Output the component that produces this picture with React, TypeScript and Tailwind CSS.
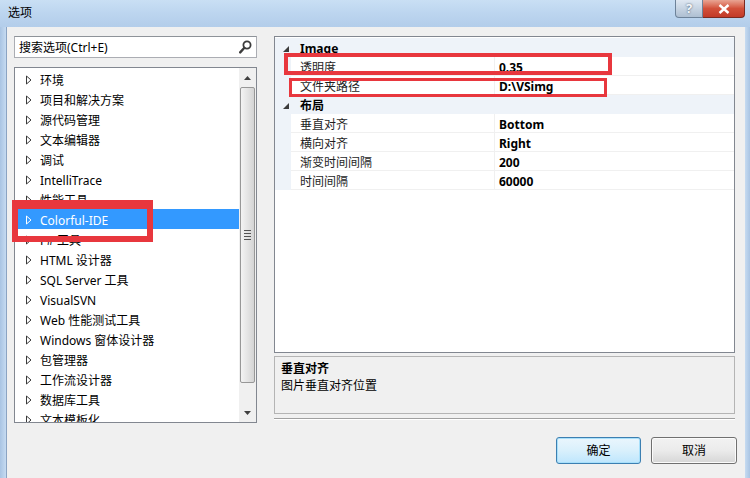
import React from "react";

const treeItems = [
  "环境",
  "项目和解决方案",
  "源代码管理",
  "文本编辑器",
  "调试",
  "IntelliTrace",
  "性能工具",
  "Colorful-IDE",
  "F# 工具",
  "HTML 设计器",
  "SQL Server 工具",
  "VisualSVN",
  "Web 性能测试工具",
  "Windows 窗体设计器",
  "包管理器",
  "工作流设计器",
  "数据库工具",
  "文本模板化",
];

type Prop = { name: string; value: string };

const groups: { title: string; props: Prop[] }[] = [
  {
    title: "Image",
    props: [
      { name: "透明度", value: "0.35" },
      { name: "文件夹路径", value: "D:\\VSimg" },
    ],
  },
  {
    title: "布局",
    props: [
      { name: "垂直对齐", value: "Bottom" },
      { name: "横向对齐", value: "Right" },
      { name: "渐变时间间隔", value: "200" },
      { name: "时间间隔", value: "60000" },
    ],
  },
];

const Expander = ({ selected }: { selected?: boolean }) => (
  <svg width="6" height="10" viewBox="0 0 6 10" className="mt-[2px] shrink-0">
    <path
      d="M0.5 1 L5 5 L0.5 9 Z"
      fill="none"
      stroke={selected ? "#ffffff" : "#3a3a3a"}
      strokeWidth="1"
    />
  </svg>
);

const TreeRow = ({ label, selected }: { label: string; selected?: boolean }) => (
  <div
    className={`flex h-[20px] shrink-0 items-center pl-[10px] ${
      selected ? "bg-[#3399ff] text-white" : "text-black"
    }`}
  >
    <Expander selected={selected} />
    <span className="ml-[8px] mt-[3px] whitespace-nowrap leading-none">{label}</span>
  </div>
);

const ScrollBar = () => (
  <div className="flex w-[17px] shrink-0 flex-col bg-[#f0f0f0]">
    <div className="flex h-[19px] items-center justify-center">
      <svg width="7" height="4" viewBox="0 0 7 4">
        <path d="M0 4 L3.5 0 L7 4 Z" fill="#404040" />
      </svg>
    </div>
    <div className="mx-[1px] flex h-[296px] items-center justify-center rounded-[2px] border border-[#979797] bg-gradient-to-r from-[#f3f3f3] via-[#e4e4e4] to-[#d4d4d4]">
      <div className="flex flex-col gap-[2px]">
        <div className="h-px w-[7px] bg-[#555]" />
        <div className="h-px w-[7px] bg-[#555]" />
        <div className="h-px w-[7px] bg-[#555]" />
        <div className="h-px w-[7px] bg-[#555]" />
      </div>
    </div>
    <div className="flex-1" />
    <div className="flex h-[19px] items-center justify-center">
      <svg width="7" height="4" viewBox="0 0 7 4">
        <path d="M0 0 L3.5 4 L7 0 Z" fill="#404040" />
      </svg>
    </div>
  </div>
);

const SearchIcon = () => (
  <svg width="13" height="14" viewBox="0 0 13 14">
    <circle cx="8" cy="5" r="3.6" fill="none" stroke="#3c3c3c" strokeWidth="1.8" />
    <path d="M5.4 7.8 L1.2 12.4" stroke="#3c3c3c" strokeWidth="2.4" strokeLinecap="round" />
  </svg>
);

const CategoryRow = ({ title }: { title: string }) => (
  <div className="flex h-[19px] items-center bg-[#eef3f9]">
    <div className="flex w-[16px] justify-end pr-[2px] pt-[2px]">
      <svg width="6" height="6" viewBox="0 0 6 6">
        <path d="M6 0 L6 6 L0 6 Z" fill="#3c3c3c" />
      </svg>
    </div>
    <span className="mt-[3px] pl-[9px] font-bold leading-none text-black">{title}</span>
  </div>
);

const PropRow = ({ prop }: { prop: Prop }) => (
  <div className="flex h-[19px] items-stretch">
    <div className="w-[16px] shrink-0 bg-[#eef3f9]" />
    <div className="flex w-[204px] shrink-0 items-center border-b border-r border-[#f0f0f0] pl-[9px] pt-[3px] leading-none text-[#1e1e1e]">
      {prop.name}
    </div>
    <div className="flex flex-1 items-center border-b border-[#f0f0f0] pl-[4px] pt-[3px] font-bold leading-none text-black">
      {prop.value}
    </div>
  </div>
);

const App = () => {
  return (
    <div className="relative flex h-[478px] w-[750px] flex-col overflow-hidden bg-[#f0f0f0] font-['Noto_Sans','Noto_Sans_CJK_SC',sans-serif] text-[12px]">
      {/* title bar */}
      <div className="flex h-[27px] shrink-0 bg-gradient-to-b from-[#c9dff4] via-[#bcd5ef] to-[#b3cdea]">
        <span className="mt-[5px] pl-[8px] text-[12px] leading-[16px] text-black">选项</span>
        <div className="ml-auto mr-[5px] flex h-[18px]">
          <div className="flex w-[28px] items-center justify-center rounded-bl-[4px] border border-t-0 border-[#6d8299] bg-gradient-to-b from-[#dfe8f2] to-[#aebfd2] text-[13px] font-bold leading-none text-[#f4f7fb] [text-shadow:0_0_2px_#33465b]">
            ?
          </div>
          <div className="flex w-[42px] items-center justify-center rounded-br-[4px] border border-l-0 border-t-0 border-[#7a2a21] bg-gradient-to-b from-[#e8a493] via-[#d2503a] to-[#c23a28]">
            <svg width="12" height="10" viewBox="0 0 12 10">
              <path d="M1.5 1 L10.5 9 M10.5 1 L1.5 9" stroke="#ffffff" strokeWidth="2.4" />
            </svg>
          </div>
        </div>
      </div>

      <div className="flex flex-1">
        <div className="w-[7px] shrink-0 border-r border-[#8ba4c3] bg-gradient-to-r from-[#a9c4e3] to-[#c6dbf1]" />

        <div className="flex flex-1 pl-[7px] pt-[9px]">
          {/* left column */}
          <div className="flex w-[243px] shrink-0 flex-col">
            <div className="flex h-[22px] items-center border border-[#abadb3] border-t-[#8e9399] bg-white pl-[4px] pr-[4px]">
              <span className="mt-[2px] flex-1 leading-none text-black">搜索选项(Ctrl+E)</span>
              <SearchIcon />
            </div>
            <div className="mt-[9px] flex h-[356px] border border-[#828790] bg-white">
              <div className="flex flex-1 flex-col overflow-hidden pl-[1px] pt-[1px]">
                {treeItems.map((t) => (
                  <TreeRow key={t} label={t} selected={t === "Colorful-IDE"} />
                ))}
              </div>
              <ScrollBar />
            </div>
          </div>

          {/* right column */}
          <div className="ml-[17px] flex w-[461px] shrink-0 flex-col">
            <div className="flex h-[317px] flex-col border border-[#828790] bg-white pt-[1px]">
              {groups.map((g) => (
                <div key={g.title}>
                  <CategoryRow title={g.title} />
                  {g.props.map((p) => (
                    <PropRow key={p.name} prop={p} />
                  ))}
                </div>
              ))}
              <div className="flex-1" />
            </div>
            <div className="mt-[3px] h-[58px] border border-[#b4b4b4] bg-[#f0f0f0] pl-[6px] pt-[3px]">
              <div className="font-bold leading-[17px] text-black">垂直对齐</div>
              <div className="leading-[17px] text-black">图片垂直对齐位置</div>
            </div>
            <div className="mt-[4px] h-[2px] border-b border-t border-b-white border-t-[#a0a0a0]" />
            <div className="-mr-[2px] mt-[17px] flex justify-end gap-[10px]">
              <button className="flex h-[27px] w-[85px] items-center justify-center rounded-[3px] border border-[#3c7fb1] bg-gradient-to-b from-[#eaf6fd] via-[#d9f0fc] to-[#bee6fd] leading-none text-black shadow-[inset_0_0_0_1px_#a8e0fb]">
                确定
              </button>
              <button className="flex h-[27px] w-[86px] items-center justify-center rounded-[3px] border border-[#707070] bg-gradient-to-b from-[#f2f2f2] via-[#ebebeb] to-[#d6d6d6] leading-none text-black shadow-[inset_0_0_0_1px_#fbfbfb]">
                取消
              </button>
            </div>
          </div>
        </div>

        <div className="w-[5px] shrink-0 bg-gradient-to-r from-[#c6dbf1] to-[#a9c4e3]" />
      </div>

      {/* red annotation boxes */}
      <div className="absolute left-[12px] top-[200px] h-[42px] w-[141px] border-[6px] border-t-[9px] border-[#e8373e]" />
      <div className="absolute left-[284px] top-[53px] h-[22px] w-[328px] border-[4px] border-[#e8373e]" />
      <div className="absolute left-[289px] top-[78px] h-[19px] w-[318px] border-[3px] border-[#e8373e]" />
    </div>
  );
};

export default App;
